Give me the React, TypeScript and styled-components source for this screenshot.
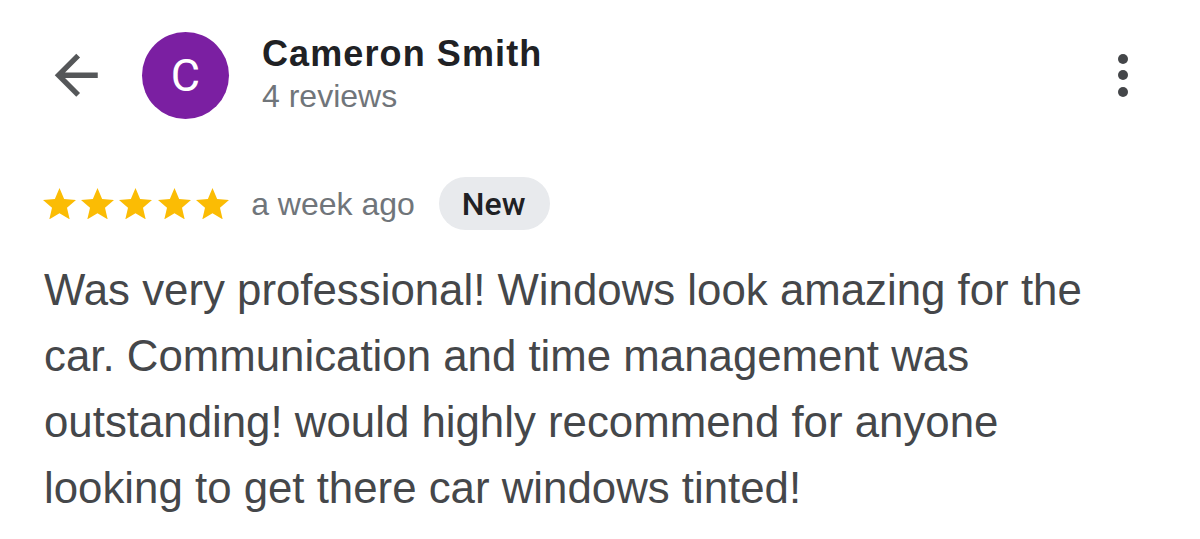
import React from "react";
import styled, { createGlobalStyle } from "styled-components";

const Global = createGlobalStyle`
  html, body { margin: 0; padding: 0; background: #ffffff; }
  body { font-family: "Liberation Sans", Arial, Helvetica, sans-serif; }
`;

const Page = styled.div`
  width: 1200px;
  height: 539px;
  background: #ffffff;
  box-sizing: border-box;
  padding-top: 32px;
  overflow: hidden;
`;

const Header = styled.header`
  display: flex;
  align-items: center;
  height: 87px;
  padding-left: 44px;
  padding-right: 72px;
`;

const BackButton = styled.button`
  display: flex;
  align-items: center;
  justify-content: center;
  width: 64.5px;
  height: 64.5px;
  padding: 0;
  border: none;
  background: transparent;
  color: #555759;
`;

const Avatar = styled.div`
  width: 87px;
  height: 87px;
  border-radius: 50%;
  background: #7b1fa2;
  color: #ffffff;
  margin-left: 33.5px;
  display: flex;
  align-items: center;
  justify-content: center;
  font-family: Roboto, "Liberation Sans", sans-serif;
  font-size: 45px;
  flex-shrink: 0;
`;

const Identity = styled.div`
  display: flex;
  flex-direction: column;
  margin-left: 33px;
  margin-bottom: 11px;
`;

const Name = styled.div`
  font-size: 36px;
  line-height: 51px;
  font-weight: 700;
  letter-spacing: 1.1px;
  color: #202124;
`;

const Count = styled.div`
  font-size: 32px;
  line-height: 34px;
  color: #70757a;
`;

const More = styled.div`
  margin-left: auto;
  display: flex;
  flex-direction: column;
  gap: 6.5px;
  margin-bottom: 1px;
`;

const Dot = styled.span`
  display: block;
  width: 10px;
  height: 10px;
  border-radius: 50%;
  background: #444649;
`;

const Meta = styled.div`
  display: flex;
  align-items: center;
  height: 53px;
  margin-top: 58px;
  padding-left: 43px;
`;

const Stars = styled.div`
  display: flex;
  gap: 5.2px;
`;

const Star = styled.svg`
  width: 33px;
  height: 31.4px;
  fill: #fbbc04;
`;

const When = styled.span`
  margin-left: 22.4px;
  font-size: 32px;
  line-height: 36px;
  color: #70757a;
`;

const Badge = styled.span`
  margin-left: 24px;
  height: 53px;
  box-sizing: border-box;
  padding: 0 25px 0 23px;
  border-radius: 27px;
  background: #e8eaed;
  display: flex;
  align-items: center;
  font-family: Roboto, "Liberation Sans", sans-serif;
  font-weight: 500;
  font-size: 32px;
  color: #202124;
`;

const Body = styled.p`
  margin: 27px 0 0 0;
  padding: 0 60px 0 44px;
  font-size: 43.8px;
  line-height: 66px;
  color: #45474a;
`;

const StarIcon = () => (
  <Star viewBox="2 2 20 19">
    <path d="M12 17.27L18.18 21l-1.64-7.03L22 9.24l-7.19-.61L12 2 9.19 8.63 2 9.24l5.46 4.73L5.82 21z" />
  </Star>
);

export default function App() {
  return (
    <>
      <Global />
      <Page>
        <Header>
          <BackButton aria-label="Back">
            <svg width="64.5" height="64.5" viewBox="0 0 24 24" fill="currentColor">
              <path d="M20 11H7.83l5.59-5.59L12 4l-8 8 8 8 1.41-1.41L7.83 13H20v-2z" />
            </svg>
          </BackButton>
          <Avatar>C</Avatar>
          <Identity>
            <Name>Cameron Smith</Name>
            <Count>4 reviews</Count>
          </Identity>
          <More aria-label="More">
            <Dot />
            <Dot />
            <Dot />
          </More>
        </Header>
        <Meta>
          <Stars>
            {[0, 1, 2, 3, 4].map((i) => (
              <StarIcon key={i} />
            ))}
          </Stars>
          <When>a week ago</When>
          <Badge>New</Badge>
        </Meta>
        <Body>
          Was very professional! Windows look amazing for the car. Communication and time
          management was outstanding! would highly recommend for anyone looking to get there
          car windows tinted!
        </Body>
      </Page>
    </>
  );
}
